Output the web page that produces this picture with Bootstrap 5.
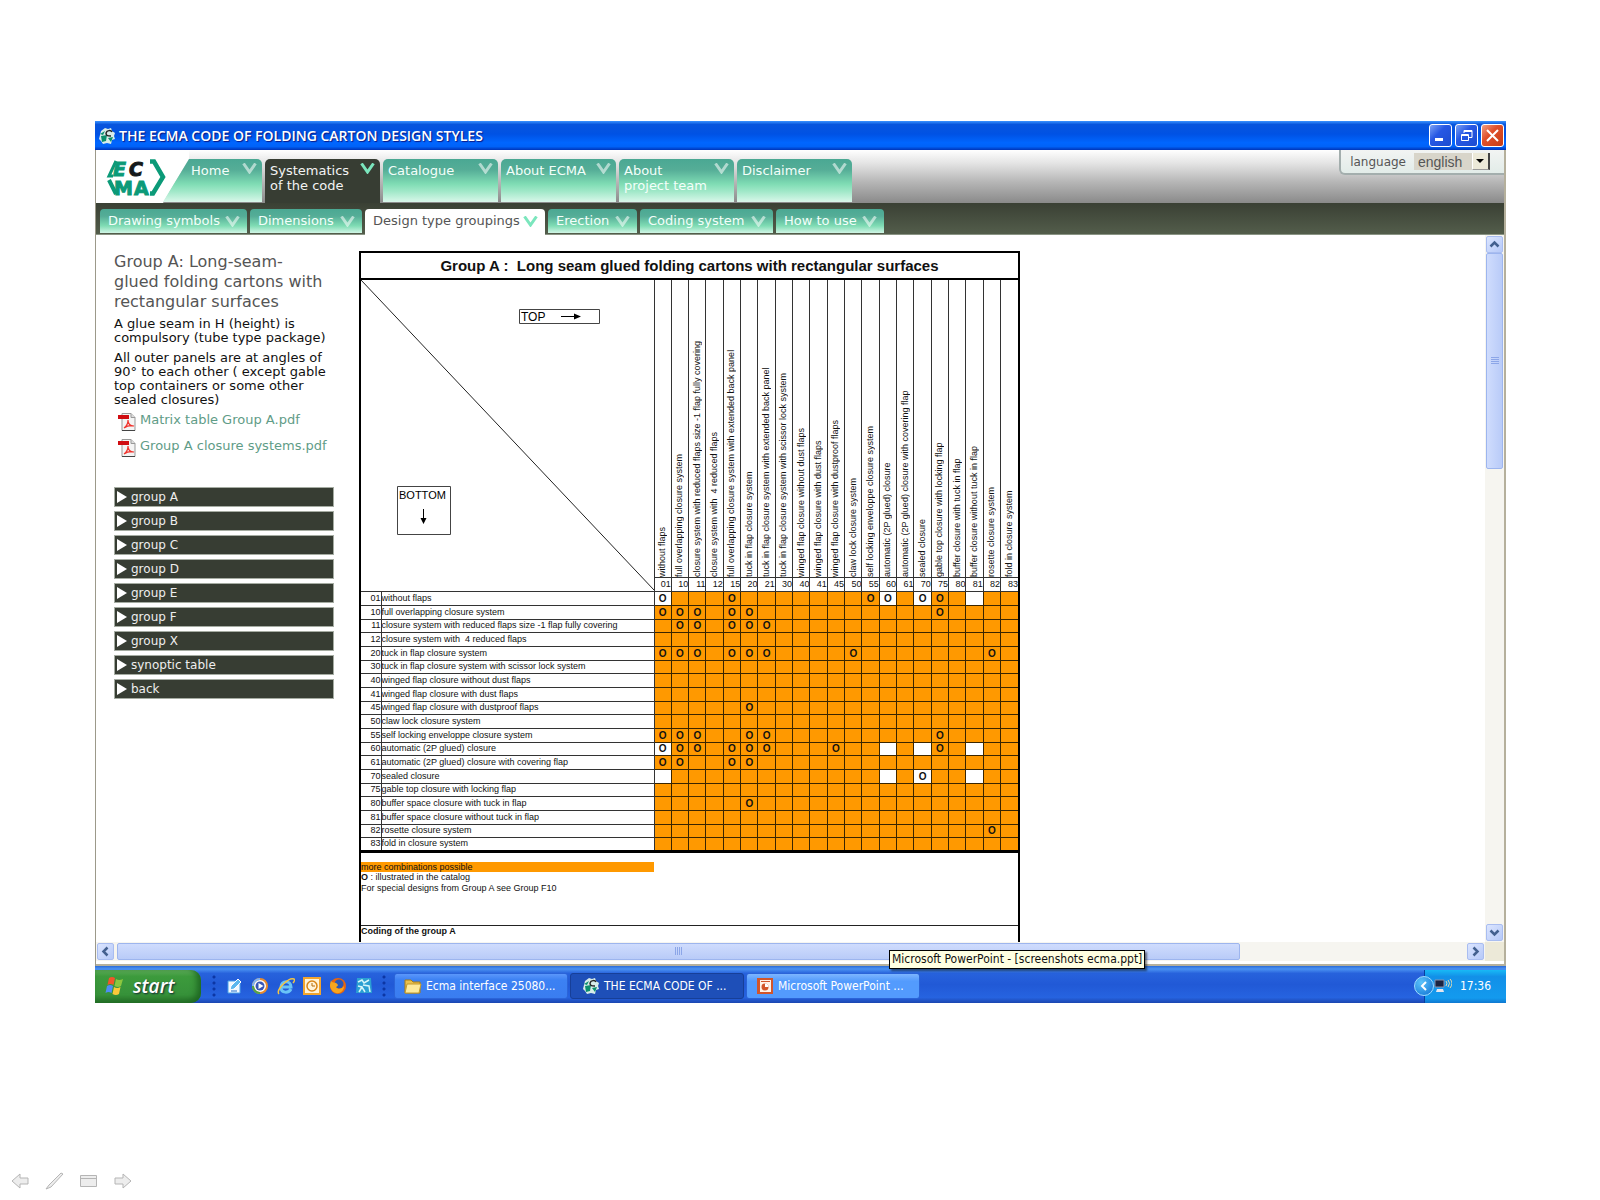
<!DOCTYPE html>
<html lang="en">
<head>
    <meta charset="UTF-8">
    <meta name="viewport" content="width=device-width, initial-scale=1">
    <title>THE ECMA CODE OF FOLDING CARTON DESIGN STYLES</title>
    <link href="https://cdn.jsdelivr.net/npm/bootstrap@5.3.3/dist/css/bootstrap.min.css" rel="stylesheet">
    <script src="https://cdn.jsdelivr.net/npm/bootstrap@5.3.3/dist/js/bootstrap.bundle.min.js"></script>
    <style>
        body { background: #fff; color: #111; font: 12px/14px Verdana, "DejaVu Sans", sans-serif; }
        button { font: inherit; }
        .desktop { padding: 121px 94px 0 95px; }
        .tahoma { font-family: "DejaVu Sans Condensed", "DejaVu Sans", sans-serif; font-size: 12px; }

        /* title bar */
        .titlebar { height: 29px; padding: 0 2px 0 3px; gap: 3px; background: linear-gradient(#3a93ff 0, #0855dd 12%, #0052e4 45%, #0066ff 75%, #0062f8 88%, #0034b8 100%); }
        .titlebar h1 { margin: 0; color: #fff; font: 600 14px/27px "Open Sans", "Noto Sans", sans-serif; text-shadow: 1px 1px 1px #0a1883; }
        .win-btns { gap: 3px; }
        .win-btn { width: 23px; height: 23px; padding: 0; border: 1px solid #fff; border-radius: 3px; background: linear-gradient(135deg, #7ba2f5, #2758e4 40%, #1c4bd0); }
        .win-btn.close-win { background: linear-gradient(135deg, #f0a085, #e0502b 40%, #c63d15); }
        .win-btn svg, .scroll-btn svg { display: block; margin: auto; }

        /* main tabs */
        .frame { border-left: 1px solid #9c998a; border-right: 2px solid #b5b09c; }
        .top-strip { height: 53px; background: linear-gradient(#fff 0, #e4e4e4 25%, #b4b4b4 62%, #8a8a8a 100%); }
        .brand { width: 93px; height: 53px; padding: 9px 0 0 12px; margin-right: -26px; background: #fff; clip-path: polygon(0 0, 100% 0, 100% 9px, 67px 100%, 0 100%); }
        .brand svg { overflow: visible; }
        .main-tabs { gap: 3px; padding-top: 9px; font-size: 13px; }
        .tab-main { width: 115px; height: 43px; padding: 4px 5px 0 5px; color: #f3fffa; line-height: 15px; text-decoration: none; white-space: nowrap; border-radius: 5px 5px 0 0; background: linear-gradient(#4aa893 0, #55ad97 25%, #7fdcb4 58%, #a0e8c8 75%, #d9f7ea 100%); }
        .tab-main:hover, .tab-sub:hover { color: #fff; }
        .tab-main.home { width: 99px; padding-left: 28px; clip-path: polygon(26px 0, 100% 0, 100% 100%, 0 100%); }
        .tab-main.current { height: 44px; color: #f3f3f3; background: #373d33; }
        .chev { fill: none; stroke: #fff; stroke-opacity: .55; stroke-width: 3; flex: none; }
        .current .chev { stroke: #7be6bd; stroke-opacity: 1; }
        .sub-strip { height: 32px; padding: 6px 0 0 4px; gap: 3px; font-size: 13px; background: linear-gradient(#3a4034, #535d4b); border-bottom: 1px solid #8a9484; }
        .tab-sub { height: 24px; padding: 0 7px 0 8px; color: #f3fffa; line-height: 22px; text-decoration: none; white-space: nowrap; border-radius: 4px 4px 0 0; background: linear-gradient(#4aa893 0, #55ad97 30%, #7fdcb4 70%, #d0f5e5 100%); }
        .tab-sub.current { height: 26px; padding-bottom: 2px; color: #555; background: #fff; }
        .tab-sub.current:hover { color: #555; }
        .lang { height: 25px; padding: 0 14px 0 9px; background: linear-gradient(#f2f4f3, #e2ece8); border: 1px solid #a3aead; border-width: 0 0 2px 2px; border-radius: 0 0 0 6px; color: #555; }
        .lang select { width: 76px; height: 17px; padding: 0 0 0 4px; border: 0; border-radius: 0; appearance: none; background: #d8d5ca; color: #555; font: 14px/16px "Liberation Sans", Arial, sans-serif; }
        .drop { position: absolute; right: 0; top: 0; width: 18px; height: 17px; background: #ece9d8; border-right: 2px solid #444; border-bottom: 1px solid #999; border-left: 1px solid #fff; pointer-events: none; }

        /* sidebar */
        .side { width: 263px; padding: 17px 25px 0 18px; font-size: 13px; }
        .side h2 { margin: 0 0 5px; color: #555; font: 16px/20px Verdana, "DejaVu Sans", sans-serif; }
        .side p { margin: 0 0 6px; }
        .pdf-link { height: 26px; padding-left: 4px; color: #5f9c87; text-decoration: none; white-space: nowrap; }
        .groups { margin-top: 22px; font-size: 12px; }
        .group-btn { height: 20px; padding: 0 0 0 2px; border: 1px solid #a5aca2; background: #373d33; color: #eee; line-height: 18px; text-align: left; }

        /* matrix */
        .sheet { width: 661px; margin-top: 16px; border: solid #000; border-width: 2px 2px 0 2px; color: #111; font: 9px/11px "Liberation Sans", Arial, sans-serif; }
        .sheet h3 { margin: 0; height: 27px; border-bottom: 2px solid #000; text-align: center; white-space: pre; font: bold 15px/26px "Liberation Sans", Arial, sans-serif; }
        .matrix { table-layout: fixed; width: 657px; border-collapse: collapse; border-bottom: 3px solid #000; }
        .matrix th, .matrix td { padding: 0; border: 1px solid #333; font-weight: normal; line-height: 11px; white-space: pre; overflow: hidden; }
        .matrix tr > :first-child { border-left: 0; }
        .matrix tr > :last-child { border-right: 0; }
        .matrix .heads > * { border-top: 0; height: 297px; vertical-align: bottom; }
        .matrix .heads span { display: block; margin: 0 auto; height: 295px; writing-mode: vertical-rl; transform: rotate(180deg); line-height: 15px; }
        .matrix .nums th { height: 14px; text-align: right; border-left-width: 1px; }
        .matrix tbody tr { height: 14px; }
        .matrix tbody tr:nth-child(3n) { height: 13px; }
        .matrix tbody .code { text-align: right; }
        .matrix tbody td { background: #ff9900; border-color: #3a2500; text-align: center; font-weight: bold; font-size: 10px; }
        .matrix tbody td.blank { background: #fff; }
        .matrix .heads .corner { white-space: normal; vertical-align: top; }
        .corner svg { display: block; }
        .legend { width: 293px; margin-top: 9px; background: #ff9900; line-height: 10px; }
        .coding { margin-top: 31px; padding-bottom: 6px; border-top: 1px solid #222; font-weight: bold; line-height: 10px; }

        /* scroll bars */
        .track { background: #f6f5f0; padding: 1px; }
        .track.down { width: 19px; }
        .scroll-btn { width: 17px; height: 17px; flex: none; padding: 0; border: 1px solid #a9bdf0; border-radius: 2px; background: linear-gradient(135deg, #dbe5ff, #b6c9f8); }
        .thumb { border: 1px solid #9db5ee; border-radius: 2px; background: #c8d6fb; }
        .thumb-v { height: 216px; background: linear-gradient(90deg, #cfdcfd, #b9cbf8); }
        .thumb-h { width: 81%; margin-left: 3px; background: linear-gradient(#cfdcfd, #b9cbf8); }
        .scroll-corner { width: 19px; background: #ece9d8; }
        .frame-foot { height: 5px; background: #fff; border-bottom: 2px solid #b5b09c; }

        /* task bar */
        .taskbar { height: 37px; padding-top: 4px; background: linear-gradient(#2a6bd8 0, #4b92f2 8%, #2762dc 20%, #2159d6 50%, #2663e0 85%, #1b46b0 100%); color: #fff; }
        .start { width: 106px; padding: 0 0 0 10px; border: 0; border-radius: 0 10px 10px 0; background: linear-gradient(#5fae5b 0, #3c9a3c 20%, #37923a 75%, #2a7a2d 100%); color: #fff; font: italic 600 19px/30px "Open Sans", "Noto Sans", sans-serif; text-shadow: 1px 1px 2px #123; box-shadow: inset -4px -2px 6px #1f6822; }
        .grip { width: 6px; height: 24px; background: radial-gradient(circle, #0c36a4 1px, transparent 2px) 0 0 / 6px 6px; }
        .quick-bar { gap: 8px; padding-left: 10px; }
        .quick { padding: 0; border: 0; background: none; width: 18px; height: 18px; }
        .quick svg { display: block; }
        .tasks { gap: 2px; padding-left: 7px; }
        .task { width: 174px; height: 26px; padding: 0 8px 0 9px; border: 1px solid #2b64d8; border-radius: 3px; background: linear-gradient(#5b97fb, #3c81f3 25%, #3a7df0); color: #fff; white-space: nowrap; }
        .task.pressed { padding-left: 11px; background: #1e4fb8; border-color: #173f98; }
        .task.hover { background: linear-gradient(#7db5ff, #539bfd 30%, #539bfd); }
        .tip { position: absolute; left: 143px; top: -23px; padding: 0 2px; border: 1px solid #000; background: #ffffe1; color: #111; line-height: 17px; white-space: nowrap; box-shadow: 2px 2px 2px rgba(0, 0, 0, .5); }
        .tray { width: 82px; padding-right: 15px; background: linear-gradient(#18b9f5 0, #1290e8 20%, #139aee 85%, #0f78d0 100%); border-left: 1px solid #0a3f9c; }
        .tray-btn { width: 20px; height: 20px; margin-left: -11px; padding: 0; border: 1px solid #9fdcff; border-radius: 50%; background: radial-gradient(circle at 35% 30%, #5cc3fb, #0c6fd2); }
        .show-tools { padding: 0 0 9px 11px; gap: 14px; }
        .show-tools button { width: 20px; height: 20px; padding: 0; border: 0; background: none; }
        .show-tools svg { display: block; fill: #ededed; stroke: #b5b5b5; }
    </style>
</head>
<body class="min-vh-100 d-flex flex-column">

<!-- shared drawings -->
<svg width="0" height="0" class="position-absolute" aria-hidden="true">
    <symbol id="chevron" viewBox="0 0 15 11"><path d="M1.500 .5 7.500 9 13.500 .5"/></symbol>
    <symbol id="globe" viewBox="0 0 18 18">
        <path d="M7 1l3 1 3-1 1 3 3 2-1 3 1 3-3 1-1 4-4-1-4 1-2-3-2-2 1-4 1-4z" fill="#d7ece9"/>
        <path d="M2 7l5-3-2 4zM3 9l6-1-1 6-4 1zM10 11l5-1-2 5z" fill="#0b8f6c"/>
        <path d="M8 6c1-3 5-3 6-1M8 6c0 3 2 3 5 3" fill="none" stroke="#222" stroke-width="1.500"/>
    </symbol>
    <symbol id="pdf" viewBox="0 0 18 18">
        <path d="M4 .5h9l4 4v13H4z" fill="#f4f4f4" stroke="#999"/><path d="M13 .5v4h4" fill="#ddd" stroke="#999"/>
        <path d="M4 17.500h13" stroke="#444"/><path d="M0 2h11v4H0z" fill="#d00d12"/>
        <path d="M6 15c3-2 4-5 4-8 0 4 2 6 6 6-4-1-7 0-10 2z" fill="none" stroke="#f0342e" stroke-width="1.200"/>
    </symbol>
</svg>

<div class="desktop">
    <header class="titlebar d-flex align-items-center">
        <svg width="18" height="18"><use href="#globe"/></svg>
        <h1>THE ECMA CODE OF FOLDING CARTON DESIGN STYLES</h1>
        <div class="win-btns d-flex ms-auto">
            <button class="win-btn" aria-label="Minimize"><svg width="15" height="15"><path d="M2 10h8v3H2z" fill="#fff"/></svg></button>
            <button class="win-btn" aria-label="Restore"><svg width="15" height="15" fill="none" stroke="#fff"><path d="M5 5V2.500h8v7h-3M5 3.500h8"/><path d="M2.500 6.500h7v6h-7zM2 7.500h7"/></svg></button>
            <button class="win-btn close-win" aria-label="Close"><svg width="15" height="15"><path d="M2 2l11 11M13 2 2 13" stroke="#fff" stroke-width="2"/></svg></button>
        </div>
    </header>

    <div class="frame">
        <div class="top-strip d-flex align-items-start">
            <a class="brand" href="#" aria-label="ECMA">
                <svg width="60" height="38" viewBox="0 0 60 38" font-family="DejaVu Sans, Verdana, sans-serif" font-weight="bold" font-size="19" fill="#0b9a78">
                    <text x="5" y="17" font-style="italic" stroke="#0b9a78">E</text>
                    <text x="21" y="17" font-style="italic" fill="#15191a" stroke="#15191a">C</text>
                    <text x="6" y="36" stroke="#0b9a78">M</text>
                    <text x="26" y="36" stroke="#0b9a78">A</text>
                    <path d="M42 2.500h4l9 15.500-10 16.500h-3" fill="none" stroke="#0b9a78" stroke-width="4.500"/>
                    <path d="M8 2 1 17h4" fill="none" stroke="#0b9a78" stroke-width="3"/>
                    <path d="M1 21 8 35" stroke="#0b9a78" stroke-width="4"/>
                </svg>
            </a>
            <nav class="main-tabs d-flex" id="mainTabs"></nav>
            <div class="lang d-flex align-items-center ms-auto">
                <label for="lang" class="me-2">language</label>
                <div class="position-relative">
                    <select id="lang" class="d-block"><option>english</option></select>
                    <span class="drop"><svg class="d-block" width="15" height="15"><path d="M3 6h8L7 10z"/></svg></span>
                </div>
            </div>
        </div>
        <nav class="sub-strip d-flex align-items-start" id="subTabs"></nav>

        <div class="d-flex">
            <aside class="side flex-shrink-0">
                <h2>Group A: Long-seam-<br>glued folding cartons with rectangular surfaces</h2>
                <p>A glue seam in H (height) is compulsory (tube type package)</p>
                <p>All outer panels are at angles of 90° to each other ( except gable top containers or some other sealed closures)</p>
                <a class="pdf-link d-flex" href="#"><svg width="18" height="18" class="me-1 flex-shrink-0"><use href="#pdf"/></svg>Matrix table Group A.pdf</a>
                <a class="pdf-link d-flex" href="#"><svg width="18" height="18" class="me-1 flex-shrink-0"><use href="#pdf"/></svg>Group A closure systems.pdf</a>
                <div class="groups d-flex flex-column gap-1" id="groups"></div>
            </aside>

            <main class="flex-grow-1">
                <div class="sheet">
                    <h3>Group A :  Long seam glued folding cartons with rectangular surfaces</h3>
                    <table class="matrix">
                        <colgroup id="cols"><col style="width:20px"><col style="width:273px"></colgroup>
                        <thead>
                        <tr class="heads" id="heads">
                            <th colspan="2" rowspan="2" class="corner">
                                <svg width="293" height="310" font-family="Liberation Sans, Arial, sans-serif" font-size="12">
                                    <path d="M0 0 293 310" stroke="#222"/>
                                    <g fill="none" stroke="#444">
                                        <path d="M158.500 29.500h80v14h-80zM36.500 206.500h53v48h-53z"/>
                                        <path d="M200 36.500h14M62.500 229v12" stroke="#000"/>
                                    </g>
                                    <path d="M213 33.500l7 3-7 3zM59.500 238h6l-3 6z"/>
                                    <text x="160" y="41">TOP</text>
                                    <text x="38" y="219" font-size="11">BOTTOM</text>
                                </svg>
                            </th>
                        </tr>
                        <tr class="nums" id="nums"></tr>
                        </thead>
                        <tbody id="rows"></tbody>
                    </table>
                    <div class="legend">more combinations possible</div>
                    <div><b>O</b> : illustrated in the catalog</div>
                    <div>For special designs from Group A see Group F10</div>
                    <div class="coding">Coding of the group A</div>
                </div>
            </main>

            <div class="track down d-flex flex-column">
                <button class="scroll-btn" aria-label="Scroll up"><svg width="13" height="13"><path d="M2.500 8.500l4-4 4 4" fill="none" stroke="#43608f" stroke-width="2.500"/></svg></button>
                <div class="thumb thumb-v d-flex align-items-center justify-content-center">
                    <svg width="8" height="8" stroke="#8ca6e8"><path d="M0 .5h8M0 2.500h8M0 4.500h8M0 6.500h8"/></svg>
                </div>
                <button class="scroll-btn mt-auto" aria-label="Scroll down"><svg width="13" height="13"><path d="M2.500 4.500l4 4 4-4" fill="none" stroke="#43608f" stroke-width="2.500"/></svg></button>
            </div>
        </div>

        <div class="d-flex">
            <div class="track d-flex flex-grow-1">
                <button class="scroll-btn" aria-label="Scroll left"><svg width="13" height="13"><path d="M8.500 2.500l-4 4 4 4" fill="none" stroke="#43608f" stroke-width="2.500"/></svg></button>
                <div class="thumb thumb-h d-flex align-items-center justify-content-center">
                    <svg width="8" height="8" stroke="#8ca6e8"><path d="M.5 0v8M2.500 0v8M4.500 0v8M6.500 0v8"/></svg>
                </div>
                <button class="scroll-btn ms-auto" aria-label="Scroll right"><svg width="13" height="13"><path d="M4.500 2.500l4 4-4 4" fill="none" stroke="#43608f" stroke-width="2.500"/></svg></button>
            </div>
            <div class="scroll-corner"></div>
        </div>
        <div class="frame-foot"></div>
    </div>

    <footer class="taskbar tahoma d-flex align-items-stretch">
        <button class="start d-flex align-items-center">
            <svg width="20" height="20" viewBox="0 0 20 20" class="me-2">
                <path d="M4 2q3-2 6 0L8.500 9q-3-2-6 0z" fill="#f0562b"/><path d="M11 3q3 2 7 0l-2 7q-3 2-6.500 0z" fill="#8cc63f"/>
                <path d="M2 10q3-2 6 0l-1.500 7q-3-2-6 0z" fill="#4f8df5"/><path d="M9 11q3 2 6.500 0L14 18q-3 2-6.500 0z" fill="#fbc83a"/>
            </svg>start
        </button>
        <div class="quick-bar d-flex align-items-center">
            <span class="grip"></span>
            <button class="quick" aria-label="Show Desktop"><svg width="18" height="18"><path d="M3 4h12v12H3z" fill="#f3f8ff" stroke="#4aa2e8"/><path d="M6 9l7-7 3 3-7 7-4 1z" fill="#5db7ee" stroke="#fff"/><path d="M6 14h6" stroke="#2371c9"/></svg></button>
            <button class="quick" aria-label="Media Player"><svg width="18" height="18"><circle cx="9" cy="9" r="7" fill="#fff" stroke="#e98b2d" stroke-width="2"/><path d="M2 9a7 7 0 0 0 7 7" fill="none" stroke="#4ea64b" stroke-width="2"/><path d="M2 9a7 7 0 0 1 7-7" fill="none" stroke="#7fb4f5" stroke-width="2"/><circle cx="9" cy="9" r="4.500" fill="#3656b7"/><path d="M7.500 6l5 3-5 3z" fill="#fff"/></svg></button>
            <button class="quick" aria-label="Internet Explorer"><svg width="18" height="18" fill="none"><path d="M4 10h10c0-7-10-7-10 0s8 6 10 2" stroke="#69c4f7" stroke-width="3"/><path d="M2 17C-2 13 12 0 17 2c1 1 0 3-1 4" stroke="#f5c643" stroke-width="1.500"/></svg></button>
            <button class="quick" aria-label="Outlook"><svg width="18" height="18"><path d="M1 1h16v16H1z" fill="#fff3d8" stroke="#f2a52e" stroke-width="2"/><circle cx="9" cy="9" r="5" fill="none" stroke="#d98516" stroke-width="1.500"/><path d="M9 6v3h3" fill="none" stroke="#b56a08"/></svg></button>
            <button class="quick" aria-label="Firefox"><svg width="18" height="18"><circle cx="9" cy="9" r="8" fill="#e8650f"/><circle cx="10" cy="7" r="4.500" fill="#2c57b5"/><path d="M2 3c0 3 3 2 5 3s3 3 0 4c2 3 6 2 8-1 0 5-4 8-8 7s-6-5-6-8z" fill="#f9a61c"/></svg></button>
            <button class="quick" aria-label="ECMA viewer"><svg width="18" height="18"><path d="M2 1h14l1 15H1z" fill="#2b9fd3"/><path d="M3 5l4-2 2 3 5-3M4 15l3-5 3 5M8 8l6 1 1 6M3 9l4 1" fill="none" stroke="#d5f5fa" stroke-width="1.500"/></svg></button>
            <span class="grip"></span>
        </div>
        <div class="tasks d-flex align-items-center">
            <button class="task d-flex align-items-center">
                <svg width="18" height="18" class="me-1"><path d="M1 3h6l2 2h7v11H1z" fill="#e9c04c" stroke="#a87c15"/><path d="M3 7h14l-2 9H1z" fill="#fdea9b" stroke="#c39a2c"/></svg>Ecma interface 25080...
            </button>
            <button class="task pressed d-flex align-items-center">
                <svg width="18" height="18" class="me-1"><use href="#globe"/></svg>THE ECMA CODE OF ...
            </button>
            <div class="position-relative">
                <button class="task hover d-flex align-items-center" aria-describedby="tip">
                    <svg width="18" height="18" class="me-1"><path d="M1 1h16v16H1z" fill="#d2552a"/><path d="M4 3h11v12H4z" fill="#fff1e6"/><circle cx="9" cy="10" r="3.500" fill="#d2552a"/><path d="M9 10V6.500A3.500 3.500 0 0 1 12.500 10z" fill="#fff"/><path d="M5 4.500h9" stroke="#d2552a"/></svg>Microsoft PowerPoint ...
                </button>
                <div class="tip" id="tip" role="tooltip">Microsoft PowerPoint - [screenshots ecma.ppt]</div>
            </div>
        </div>
        <div class="tray d-flex align-items-center ms-auto">
            <button class="tray-btn" aria-label="Show hidden icons"><svg class="d-block m-auto" width="12" height="12"><path d="M8 2 4 6l4 4" fill="none" stroke="#fff" stroke-width="2"/></svg></button>
            <svg width="18" height="16"><path d="M1 2h9v7H1z" fill="#1b2340" stroke="#8a93ad"/><path d="M3 11h6l1 3H2z" fill="#e6e6ee"/><path d="M12 3q2 2 0 5M14 2q3 3 0 7M16 1q4 4 0 9" fill="none" stroke="#e7dcae"/></svg>
            <span class="ms-auto">17:36</span>
        </div>
    </footer>
</div>

<div class="show-tools d-flex mt-auto">
    <button aria-label="Previous slide"><svg width="20" height="20"><path d="M1 10l8-7v4h8v6H9v4z"/></svg></button>
    <button aria-label="Pen"><svg width="20" height="20"><path d="M1 18l3-4L16 2l2 1L6 16z"/></svg></button>
    <button aria-label="Slide menu"><svg width="20" height="20"><path d="M1.500 4.500h16v11h-16z"/><path d="M2 7.500h15"/></svg></button>
    <button aria-label="Next slide"><svg width="20" height="20"><path d="M18 10l-8-7v4H2v6h8v4z"/></svg></button>
</div>

<script>
    const chevron = '<svg class="chev ms-auto" width="15" height="11"><use href="#chevron"/></svg>';

    const mainTabs = ['Home', 'Systematics<br>of the code', 'Catalogue', 'About ECMA', 'About<br>project team', 'Disclaimer'];
    document.getElementById('mainTabs').innerHTML = mainTabs.map((t, i) =>
        `<a href="#" class="tab-main d-flex align-items-start ${i === 0 ? 'home' : ''} ${i === 1 ? 'current' : ''}"><span>${t}</span>${chevron}</a>`).join('');

    // label and width of each second level tab
    const subTabs = [['Drawing symbols', 147], ['Dimensions', 112], ['Design type groupings', 180], ['Erection', 89], ['Coding system', 133], ['How to use', 108]];
    document.getElementById('subTabs').innerHTML = subTabs.map((t, i) =>
        `<a href="#" class="tab-sub d-flex align-items-center ${i === 2 ? 'current' : ''}" style="width:${t[1]}px"><span>${t[0]}</span>${chevron}</a>`).join('');

    const groups = ['group A', 'group B', 'group C', 'group D', 'group E', 'group F', 'group X', 'synoptic table', 'back'];
    document.getElementById('groups').innerHTML = groups.map(g =>
        `<button class="group-btn d-flex align-items-center"><svg class="me-1" width="10" height="12"><path d="M0 0l10 6-10 6z" fill="#fff"/></svg>${g}</button>`).join('');

    const columns = [
        ['01', 'without flaps'], ['10', 'full overlapping closure system'], ['11', 'closure system with reduced flaps size -1 flap fully covering'],
        ['12', 'closure system with  4 reduced flaps'], ['15', 'full overlapping closure system with extended back panel'],
        ['20', 'tuck in flap closure system'], ['21', 'tuck in flap closure system with extended back panel'],
        ['30', 'tuck in flap closure system with scissor lock system'], ['40', 'winged flap closure without dust flaps'],
        ['41', 'winged flap closure with dust flaps'], ['45', 'winged flap closure with dustproof flaps'], ['50', 'claw lock closure system'],
        ['55', 'self locking enveloppe closure system'], ['60', 'automatic (2P glued) closure'], ['61', 'automatic (2P glued) closure with covering flap'],
        ['70', 'sealed closure'], ['75', 'gable top closure with locking flap'], ['80', 'buffer closure with tuck in flap'],
        ['81', 'buffer closure without tuck in flap'], ['82', 'rosette closure system'], ['83', 'fold in closure system']
    ];
    // code, label, illustrated columns, impossible (white) columns
    const rows = [
        ['01', 'without flaps', '01 15 55 60 70 75', '01 60 70 81'],
        ['10', 'full overlapping closure system', '01 10 11 15 20 75', ''],
        ['11', 'closure system with reduced flaps size -1 flap fully covering', '10 11 15 20 21', ''],
        ['12', 'closure system with  4 reduced flaps', '', ''],
        ['20', 'tuck in flap closure system', '01 10 11 15 20 21 50 82', ''],
        ['30', 'tuck in flap closure system with scissor lock system', '', ''],
        ['40', 'winged flap closure without dust flaps', '', ''],
        ['41', 'winged flap closure with dust flaps', '', ''],
        ['45', 'winged flap closure with dustproof flaps', '20', ''],
        ['50', 'claw lock closure system', '', ''],
        ['55', 'self locking enveloppe closure system', '01 10 11 20 21 75', ''],
        ['60', 'automatic (2P glued) closure', '01 10 11 15 20 21 45 75', '01 60 70 81'],
        ['61', 'automatic (2P glued) closure with covering flap', '01 10 15 20', ''],
        ['70', 'sealed closure', '70', '01 60 70 81'],
        ['75', 'gable top closure with locking flap', '', ''],
        ['80', 'buffer space closure with tuck in flap', '20', ''],
        ['81', 'buffer space closure without tuck in flap', '', ''],
        ['82', 'rosette closure system', '82', ''],
        ['83', 'fold in closure system', '', '']
    ];
    document.getElementById('cols').insertAdjacentHTML('beforeend', '<col>'.repeat(columns.length));
    document.getElementById('heads').insertAdjacentHTML('beforeend', columns.map(c => `<th><span>${c[1]}</span></th>`).join(''));
    document.getElementById('nums').innerHTML = columns.map(c => `<th>${c[0]}</th>`).join('');
    document.getElementById('rows').innerHTML = rows.map(r => {
        const cells = columns.map(c =>
            `<td class="${r[3].includes(c[0]) ? 'blank' : ''}">${r[2].includes(c[0]) ? 'O' : ''}</td>`).join('');
        return `<tr><th class="code">${r[0]}</th><th>${r[1]}</th>${cells}</tr>`;
    }).join('');
</script>
</body>
</html>
